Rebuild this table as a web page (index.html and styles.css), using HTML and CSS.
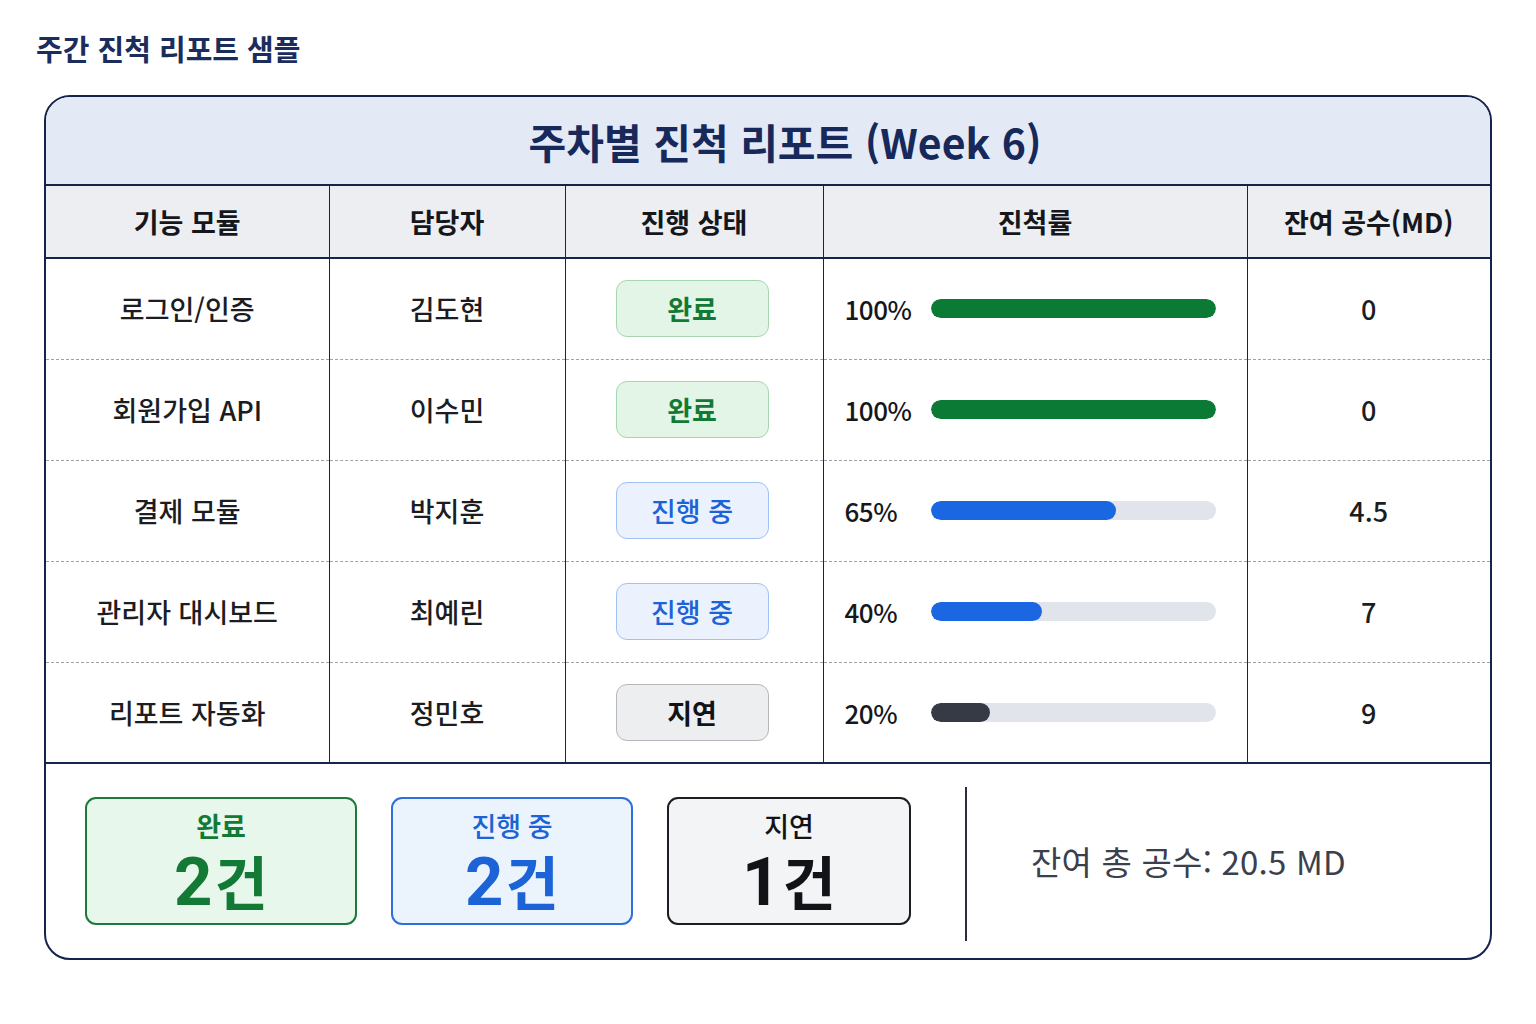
FILE: index.html
```html
<!DOCTYPE html>
<html lang="ko">
<head>
<meta charset="utf-8">
<link rel="stylesheet" href="styles.css">
</head>
<body>
<div class="page">
  <h1 class="page-title">주간 진척 리포트 샘플</h1>
  <div class="card">
    <div class="card-head">주차별 진척 리포트 (Week 6)</div>
    <table class="report">
      <colgroup>
        <col class="c1"><col class="c2"><col class="c3"><col class="c4"><col class="c5">
      </colgroup>
      <thead>
        <tr><th>기능 모듈</th><th>담당자</th><th>진행 상태</th><th>진척률</th><th>잔여 공수(MD)</th></tr>
      </thead>
      <tbody>
        <tr>
          <td>로그인/인증</td><td>김도현</td>
          <td><span class="badge done">완료</span></td>
          <td><div class="prog"><span class="pct">100%</span><div class="track"><div class="fill green" style="width:100%"></div></div></div></td>
          <td>0</td>
        </tr>
        <tr>
          <td>회원가입 API</td><td>이수민</td>
          <td><span class="badge done">완료</span></td>
          <td><div class="prog"><span class="pct">100%</span><div class="track"><div class="fill green" style="width:100%"></div></div></div></td>
          <td>0</td>
        </tr>
        <tr>
          <td>결제 모듈</td><td>박지훈</td>
          <td><span class="badge prog-b">진행 중</span></td>
          <td><div class="prog"><span class="pct">65%</span><div class="track"><div class="fill blue" style="width:65%"></div></div></div></td>
          <td>4.5</td>
        </tr>
        <tr>
          <td>관리자 대시보드</td><td>최예린</td>
          <td><span class="badge prog-b">진행 중</span></td>
          <td><div class="prog"><span class="pct">40%</span><div class="track"><div class="fill blue" style="width:39%"></div></div></div></td>
          <td>7</td>
        </tr>
        <tr class="last">
          <td>리포트 자동화</td><td>정민호</td>
          <td><span class="badge delay">지연</span></td>
          <td><div class="prog"><span class="pct">20%</span><div class="track"><div class="fill dark" style="width:21%"></div></div></div></td>
          <td>9</td>
        </tr>
      </tbody>
    </table>
    <div class="summary">
      <div class="sbox s-done"><div class="s-label">완료</div><div class="s-num">2<span class="unit">건</span></div></div>
      <div class="sbox s-prog"><div class="s-label">진행 중</div><div class="s-num">2<span class="unit">건</span></div></div>
      <div class="sbox s-delay"><div class="s-label">지연</div><div class="s-num">1<span class="unit">건</span></div></div>
      <div class="divider"></div>
      <div class="total">잔여 총 공수: 20.5 MD</div>
    </div>
  </div>
</div>
</body>
</html>
```
FILE: styles.css
```css
* { box-sizing: border-box; }
html, body { margin: 0; padding: 0; background: #ffffff; }
body {
  font-family: "Noto Sans CJK KR", "Noto Sans", sans-serif;
  color: #1b1d22;
}
.page { padding: 28px 44px 0 44px; }
.page-title {
  margin: 0 0 0 -8px;
  font-size: 29px;
  line-height: 40px;
  font-weight: 700;
  color: #1b2d5c;
}
.card {
  margin-top: 27px;
  width: 1448px;
  border: 2px solid #14244c;
  border-radius: 26px;
  overflow: hidden;
  background: #fff;
}
.card-head {
  height: 89px;
  background: #e3eaf6;
  display: flex;
  align-items: center;
  justify-content: center;
  padding-left: 34px;
  font-size: 41px;
  font-weight: 700;
  color: #17285a;
  border-bottom: 2px solid #14244c;
}
.report {
  width: 100%;
  border-collapse: collapse;
  table-layout: fixed;
}
.c1 { width: 283px; }
.c2 { width: 236px; }
.c3 { width: 258px; }
.c4 { width: 424px; }
.c5 { width: auto; }
.report th {
  height: 72px;
  background: #eceef1;
  font-size: 27px;
  font-weight: 700;
  color: #15171c;
  border-bottom: 2px solid #14244c;
  border-left: 1.5px solid #14244c;
  padding: 0;
}
.report td {
  height: 101px;
  text-align: center;
  font-size: 27px;
  font-weight: 500;
  color: #1b1d22;
  border-left: 1.5px solid #14244c;
  border-bottom: 1.5px dashed #9ea3ab;
  padding: 0;
}
.report th:first-child, .report td:first-child { border-left: none; }
.report tr.last td { border-bottom: 2px solid #14244c; }
.badge {
  display: inline-flex;
  align-items: center;
  justify-content: center;
  width: 153px;
  height: 57px;
  margin-right: 4px;
  border-radius: 11px;
  font-size: 27px;
  font-weight: 700;
  border: 1.5px solid;
}
.badge.done { background: #e3f5e7; border-color: #a6d6b1; color: #137a35; }
.badge.prog-b { background: #ebf2fe; border-color: #9fc2f3; color: #1b63d6; font-weight: 500; }
.badge.delay { background: #eceef0; border-color: #b5b7bb; color: #121317; }
.prog {
  display: flex;
  align-items: center;
  padding-left: 21px;
  padding-right: 31px;
}
.pct {
  width: 86px;
  text-align: left;
  font-size: 26px;
  color: #15171c;
  letter-spacing: -0.5px;
}
.track {
  flex: 1;
  height: 19px;
  border-radius: 10px;
  background: #e1e4ea;
  overflow: hidden;
}
.fill { height: 100%; border-radius: 10px; }
.fill.green { background: #0a7a35; }
.fill.blue { background: #1b67e1; }
.fill.dark { background: #353a44; }
.summary {
  height: 194px;
  display: flex;
  align-items: center;
  padding-left: 39px;
}
.sbox {
  height: 128px;
  border-radius: 11px;
  border: 2px solid;
  display: flex;
  flex-direction: column;
  align-items: center;
  justify-content: center;
  margin-right: 34px;
  padding-top: 6px;
  font-family: Roboto, "Noto Sans CJK KR", sans-serif;
}
.s-label { font-size: 27px; font-weight: 700; line-height: 32px; margin-bottom: 6px; }
.s-num { font-size: 67px; font-weight: 700; line-height: 64px; }
.s-num .unit { font-size: 58px; margin-left: 2px; }
.s-done { width: 272px; background: #e7f7ec; border-color: #1d7a3a; color: #137a35; }
.s-prog { width: 242px; background: #ebf3fd; border-color: #2d6fdc; color: #1b63d6; }
.s-prog .s-label { font-weight: 500; }
.s-delay { width: 244px; background: #f3f4f6; border-color: #1b1d22; color: #121317; margin-right: 54px; }
.s-delay .s-label { font-weight: 500; }
.divider {
  width: 2px;
  height: 154px;
  background: #2a2f3a;
  margin-top: 6px;
}
.total {
  margin-left: 64px;
  font-size: 33px;
  color: #3a404c;
  letter-spacing: 0.2px;
}
```
